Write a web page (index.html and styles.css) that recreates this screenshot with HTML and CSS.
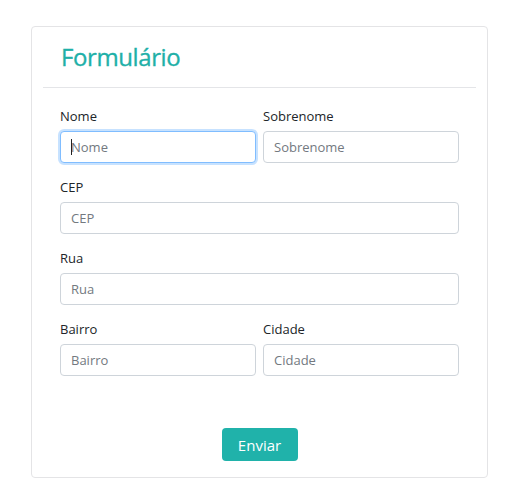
FILE: index.html
```html
<!DOCTYPE html>
<html lang="pt-BR">
<head>
<meta charset="utf-8">
<title>Formulário</title>
<link rel="stylesheet" href="styles.css">
</head>
<body>
<div class="page">
  <form class="card">
    <div class="card-header">
      <h1 class="title">Formulário</h1>
    </div>
    <div class="card-body">
      <div class="row">
        <div class="group">
          <label class="label" for="nome">Nome</label>
          <div class="field">
            <input class="control focused" id="nome" type="text" placeholder="Nome">
            <span class="caret"></span>
          </div>
        </div>
        <div class="group">
          <label class="label" for="sobrenome">Sobrenome</label>
          <input class="control" id="sobrenome" type="text" placeholder="Sobrenome">
        </div>
      </div>
      <div class="group">
        <label class="label" for="cep">CEP</label>
        <input class="control" id="cep" type="text" placeholder="CEP">
      </div>
      <div class="group">
        <label class="label" for="rua">Rua</label>
        <input class="control" id="rua" type="text" placeholder="Rua">
      </div>
      <div class="row">
        <div class="group">
          <label class="label" for="bairro">Bairro</label>
          <input class="control" id="bairro" type="text" placeholder="Bairro">
        </div>
        <div class="group">
          <label class="label" for="cidade">Cidade</label>
          <input class="control" id="cidade" type="text" placeholder="Cidade">
        </div>
      </div>
      <div class="actions">
        <button class="btn" type="button">Enviar</button>
      </div>
    </div>
  </form>
</div>
</body>
</html>
```

FILE: styles.css
```css
* {
  box-sizing: border-box;
}

html, body {
  margin: 0;
  padding: 0;
  background: #ffffff;
}

body {
  font-family: "Open Sans", "Noto Sans", sans-serif;
  color: #212529;
}

.page {
  padding: 26px 0 0 31px;
}

.card {
  width: 457px;
  border: 1px solid #e4e4e6;
  border-radius: 4px;
  background: #fff;
  margin: 0;
}

.card-header {
  margin: 0 11px;
  height: 61px;
  border-bottom: 1px solid #e4e5e8;
}

.title {
  margin: 0;
  padding-left: 18px;
  font-size: 24px;
  line-height: 60px;
  font-weight: 400;
  letter-spacing: -0.4px;
  color: #1fb0a8;
  -webkit-text-stroke: 0.35px #1fb0a8;
}

.card-body {
  padding: 18px 28px 16px;
  display: flex;
  flex-direction: column;
  gap: 14px;
}

.row {
  display: grid;
  grid-template-columns: 1fr 1fr;
  gap: 7px;
}

.group {
  display: flex;
  flex-direction: column;
}

.label {
  font-size: 13px;
  line-height: 20px;
  margin-bottom: 5px;
  color: #212529;
}

.field {
  position: relative;
}

.caret {
  position: absolute;
  left: 11px;
  top: 8px;
  width: 1px;
  height: 16px;
  background: #222;
}

.control {
  display: block;
  height: 32px;
  width: 100%;
  border: 1px solid #ced4da;
  border-radius: 4px;
  padding: 0 10px;
  font-family: inherit;
  font-size: 13px;
  color: #495057;
  background: #fff;
  outline: none;
}

.control::placeholder {
  color: #73797f;
  opacity: 1;
}

.control.focused {
  border-color: #80bdff;
  box-shadow: 0 0 0 2px rgba(0, 123, 255, 0.22);
}

.actions {
  display: flex;
  justify-content: center;
  padding-top: 38px;
}

.btn {
  width: 76px;
  height: 33px;
  border: none;
  border-radius: 4px;
  background: #20b2aa;
  color: #ffffff;
  font-family: inherit;
  font-size: 15px;
  padding: 0;
  cursor: pointer;
}
```
